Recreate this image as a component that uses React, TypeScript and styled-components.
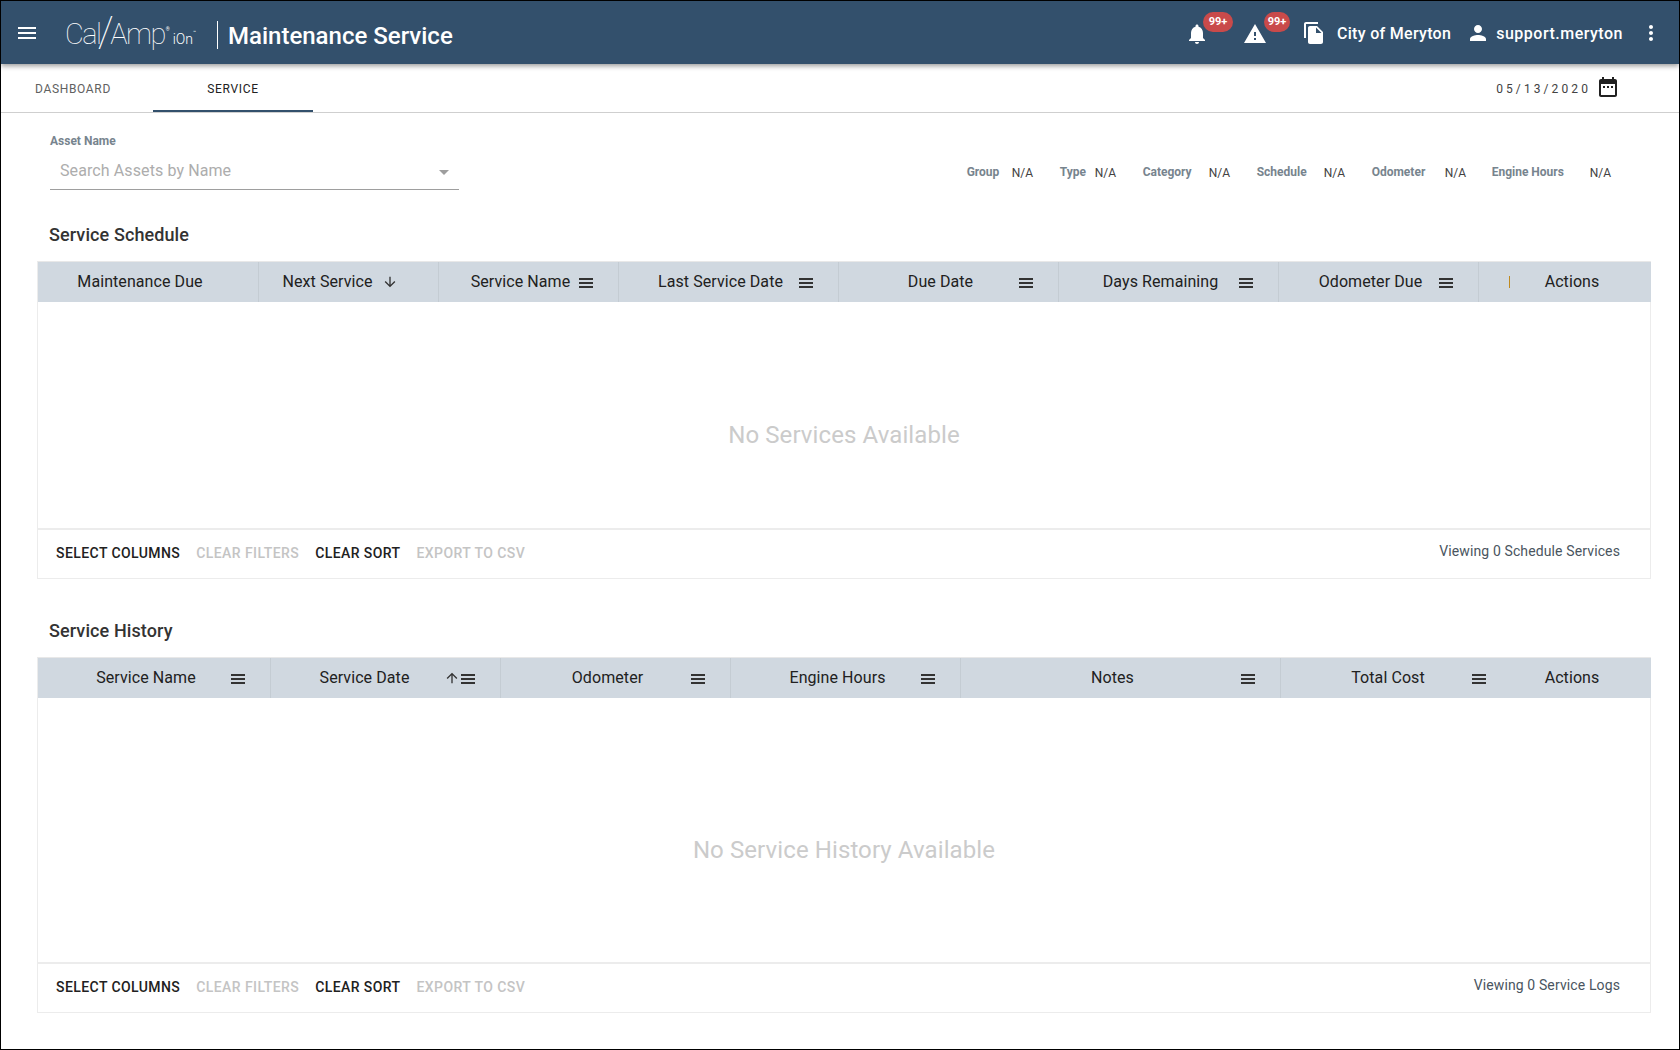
import React from "react";
import styled, { createGlobalStyle } from "styled-components";

const Global = createGlobalStyle`
  html, body { margin: 0; padding: 0; background: #fff; }
  body { font-family: Roboto, "Liberation Sans", sans-serif; color: #212121; }
  * { box-sizing: border-box; }
`;

const Page = styled.div`
  width: 1680px;
  height: 1050px;
  border: 1px solid #000;
  display: flex;
  flex-direction: column;
  overflow: hidden;
  background: #fff;
`;

const TopBar = styled.header`
  height: 63px;
  flex: none;
  display: flex;
  align-items: center;
  background: #33506c;
  color: #fff;
  position: relative;
  z-index: 1;
  box-shadow: 0 2px 5px rgba(0, 0, 0, 0.4);
  padding-left: 14px;
`;

const Icon = styled.svg<{ $size?: number; $color?: string }>`
  width: ${(p) => p.$size ?? 24}px;
  height: ${(p) => p.$size ?? 24}px;
  flex: none;
  display: block;
  fill: ${(p) => p.$color ?? "currentColor"};
`;

const Logo = styled.div`
  margin: 4px 0 0 26px;
  width: 142px;
  display: flex;
  align-items: baseline;
  font-weight: 100;
  font-size: 29px;
  letter-spacing: -1.6px;
  white-space: nowrap;
  line-height: 40px;
`;

const LogoSlash = styled.span`
  font-size: 42px;
  font-weight: 100;
  letter-spacing: -3.5px;
  margin-left: -2.5px;
  line-height: 40px;
  transform: translateY(2px);
`;

const LogoReg = styled.span`
  font-size: 5px;
  line-height: 5px;
  font-weight: 400;
  letter-spacing: 0;
  align-self: flex-start;
  margin: 17px 3px 0 1px;
`;

const LogoIon = styled.span`
  font-size: 14px;
  font-weight: 300;
  letter-spacing: 0;
`;

const LogoTm = styled.span`
  font-size: 5px;
  line-height: 5px;
  font-weight: 400;
  letter-spacing: 0;
  align-self: flex-start;
  margin-top: 20px;
`;

const TitleRule = styled.div`
  width: 1px;
  height: 28px;
  background: #fff;
  margin-left: 10px;
  margin-top: 4px;
`;

const AppTitle = styled.h1`
  margin: 7px 0 0 10px;
  font-size: 24px;
  font-weight: 500;
  line-height: 32px;
`;

const TopActions = styled.div`
  margin-left: auto;
  display: flex;
  align-items: center;
  padding-right: 16px;
`;

const AlertSlot = styled.div<{ $width: number }>`
  position: relative;
  width: ${(p) => p.$width}px;
  display: flex;
  margin-top: 2px;
`;

const Badge = styled.span<{ $left: number; $width: number }>`
  position: absolute;
  left: ${(p) => p.$left}px;
  top: -10px;
  width: ${(p) => p.$width}px;
  height: 20px;
  border-radius: 10px;
  background: #c94a4a;
  color: #fff;
  font-size: 11px;
  font-weight: 700;
  line-height: 19px;
  text-align: center;
`;

const TopText = styled.span<{ $gap: number; $track: number }>`
  font-size: 16px;
  font-weight: 500;
  line-height: 24px;
  margin: 2px 0 0 ${(p) => p.$gap}px;
  letter-spacing: ${(p) => p.$track}px;
`;

const TopIcon = styled.span<{ $gap: number }>`
  margin-left: ${(p) => p.$gap}px;
`;

const TabsBar = styled.nav`
  height: 49px;
  flex: none;
  display: flex;
  align-items: stretch;
  border-bottom: 1px solid #cfcfcf;
`;

const Tab = styled.div<{ $active?: boolean; $width: number; $shift?: number }>`
  width: ${(p) => p.$width}px;
  padding-right: ${(p) => p.$shift ?? 0}px;
  padding-top: 4px;
  height: 48px;
  display: flex;
  align-items: center;
  justify-content: center;
  font-size: 12px;
  letter-spacing: 0.65px;
  color: ${(p) => (p.$active ? "#212121" : "#616161")};
  border-bottom: 2px solid ${(p) => (p.$active ? "#33506c" : "transparent")};
`;

const DateBox = styled.div`
  margin-left: auto;
  display: flex;
  align-items: center;
  padding-right: 59px;
  color: #212121;
  padding-bottom: 2px;
`;

const DateText = styled.span`
  font-size: 12px;
  letter-spacing: 3.1px;
  color: #424242;
  margin-right: 5px;
  padding-top: 4px;
`;

const Content = styled.main`
  flex: 1;
  padding: 0 28px 0 36px;
`;

const AssetRow = styled.section`
  height: 77px;
  display: flex;
  justify-content: space-between;
  padding: 20px 40px 0 13px;
`;

const AssetField = styled.div`
  width: 409px;
`;

const FieldLabel = styled.div`
  font-size: 12px;
  font-weight: 700;
  line-height: 16px;
  color: #77848e;
`;

const FieldInput = styled.div`
  height: 41px;
  display: flex;
  align-items: center;
  justify-content: space-between;
  padding: 3px 10px 0 10px;
  border-bottom: 1px solid #9e9e9e;
  font-size: 16px;
  letter-spacing: 0.1px;
  color: #adadad;
`;

const Caret = styled.span`
  width: 0;
  height: 0;
  margin-top: 3px;
  border-left: 5px solid transparent;
  border-right: 5px solid transparent;
  border-top: 5px solid #9e9e9e;
`;

const InfoRow = styled.div`
  display: flex;
  align-items: center;
  height: 20px;
  margin-top: 29px;
`;

const InfoPair = styled.div<{ $width?: number }>`
  display: flex;
  align-items: center;
  width: ${(p) => (p.$width ? `${p.$width}px` : "auto")};
`;

const InfoLabel = styled.span<{ $width: number }>`
  width: ${(p) => p.$width}px;
  font-size: 12px;
  font-weight: 700;
  color: #77848e;
  white-space: nowrap;
`;

const InfoValue = styled.span`
  font-size: 12px;
  color: #424242;
  padding-top: 1px;
`;

const SectionTitle = styled.h2<{ $top: number }>`
  margin: 0 0 14px 12px;
  font-size: 18px;
  font-weight: 500;
  line-height: 24px;
  letter-spacing: 0.1px;
  color: #333;
  padding-top: ${(p) => p.$top}px;
`;

const Table = styled.section`
  border: 1px solid #ececec;
  border-top-color: #e8e8e8;
`;

const HeadRow = styled.div`
  display: flex;
  height: 40px;
  background: #d0d8e0;
  margin: 0 -1px 0 0;
`;

const HeadCell = styled.div<{ $width: number; $divider?: boolean }>`
  width: ${(p) => p.$width}px;
  flex: none;
  display: flex;
  align-items: center;
  padding-right: 23px;
  border-right: ${(p) => (p.$divider ? "1px solid #c4ccd3" : "0")};
  font-size: 16px;
  line-height: 20px;
  letter-spacing: 0.08px;
  color: #212121;
  white-space: nowrap;
`;

const HeadLabel = styled.span<{ $overlap: number }>`
  flex: 1;
  min-width: 0;
  text-align: center;
  margin-right: -${(p) => p.$overlap}px;
`;

const MenuGlyph = styled(Icon)<{ $hidden?: boolean }>`
  visibility: ${(p) => (p.$hidden ? "hidden" : "visible")};
  margin-top: 2px;
  color: #333;
`;

const SortGlyph = styled(Icon)`
  margin-right: -1px;
  color: #333;
`;

const ResizeCell = styled.div`
  width: 32px;
  flex: none;
  display: flex;
  align-items: center;
  justify-content: flex-end;
  padding-right: 1px;
`;

const ResizeTick = styled.span`
  width: 1px;
  height: 12px;
  background: #c08a20;
`;

const Body = styled.div<{ $height: number }>`
  height: ${(p) => p.$height}px;
  padding-top: 40px;
  display: flex;
  align-items: center;
  justify-content: center;
  font-size: 24px;
  letter-spacing: 0.1px;
  color: #cbcbcb;
`;

const Footer = styled.div`
  height: 50px;
  border-top: 2px solid #ececec;
  display: flex;
  justify-content: space-between;
  padding: 0 30px 0 18px;
`;

const ButtonRow = styled.div`
  display: flex;
  align-items: center;
  gap: 16px;
  padding-bottom: 3px;
`;

const FootButton = styled.span<{ $disabled?: boolean }>`
  font-size: 14px;
  font-weight: 500;
  letter-spacing: 0.42px;
  color: ${(p) => (p.$disabled ? "#c4c4c4" : "#212121")};
  white-space: nowrap;
`;

const Count = styled.span`
  font-size: 14px;
  letter-spacing: 0.12px;
  color: #4a5560;
  padding-top: 11px;
  line-height: 20px;
`;

const P = {
  menu: "M3 18h18v-2H3v2zm0-5h18v-2H3v2zm0-7v2h18V6H3z",
  bars: "M2 4h14v2H2zM2 8h14v2H2zM2 12h14v2H2z",
  down: "M20 12l-1.41-1.41L13 16.17V4h-2v12.17l-5.58-5.59L4 12l8 8 8-8z",
  up: "M4 12l1.41 1.41L11 7.83V20h2V7.83l5.58 5.59L20 12l-8-8-8 8z",
  bell: "M12 22c1.1 0 2-.9 2-2h-4c0 1.1.89 2 2 2zm6-6v-5c0-3.07-1.64-5.64-4.5-6.32V4c0-.83-.67-1.5-1.5-1.5s-1.5.67-1.5 1.5v.68C7.63 5.36 6 7.92 6 11v5l-2 2v1h16v-1l-2-2z",
  warn: "M1 21h22L12 2 1 21zm12-3h-2v-2h2v2zm0-4h-2v-4h2v4z",
  copy: "M16 1H4c-1.1 0-2 .9-2 2v14h2V3h12V1zm-1 4l6 6v10c0 1.1-.9 2-2 2H7.99C6.89 23 6 22.1 6 21l.01-14c0-1.1.89-2 1.99-2h7zm-1 7h5.5L14 6.5V12z",
  person: "M12 12c2.21 0 4-1.79 4-4s-1.79-4-4-4-4 1.79-4 4 1.79 4 4 4zm0 2c-2.67 0-8 1.34-8 4v2h16v-2c0-2.66-5.33-4-8-4z",
  more: "M12 8c1.1 0 2-.9 2-2s-.9-2-2-2-2 .9-2 2 .9 2 2 2zm0 2c-1.1 0-2 .9-2 2s.9 2 2 2 2-.9 2-2-.9-2-2-2zm0 6c-1.1 0-2 .9-2 2s.9 2 2 2 2-.9 2-2-.9-2-2-2z",
  date: "M9 11H7v2h2v-2zm4 0h-2v2h2v-2zm4 0h-2v2h2v-2zm2-7h-1V2h-2v2H8V2H6v2H5c-1.11 0-1.99.9-1.99 2L3 20c0 1.1.89 2 2 2h14c1.1 0 2-.9 2-2V6c0-1.1-.9-2-2-2zm0 16H5V9h14v11z",
};

const Glyph = ({ d, size, color }: { d: string; size?: number; color?: string }) => (
  <Icon viewBox="0 0 24 24" $size={size} $color={color}>
    <path d={d} />
  </Icon>
);

type Column = { label: string; width: number; sort?: "up" | "down"; menu?: boolean; divider?: boolean };

const Column = ({ label, width, sort, menu, divider }: Column) => {
  const overlap = sort ? 14 : 25;
  return (
    <HeadCell $width={width} $divider={divider}>
      <HeadLabel $overlap={overlap}>{label}</HeadLabel>
      {sort && (
        <SortGlyph viewBox="0 0 24 24" $size={16}>
          <path d={P[sort]} />
        </SortGlyph>
      )}
      <MenuGlyph viewBox="0 0 18 18" $size={18} $hidden={!menu}>
        <path d={P.bars} />
      </MenuGlyph>
    </HeadCell>
  );
};

const scheduleColumns: Column[] = [
  { label: "Maintenance Due", width: 221, divider: true },
  { label: "Next Service", width: 180, sort: "down", divider: true },
  { label: "Service Name", width: 180, menu: true, divider: true },
  { label: "Last Service Date", width: 220, menu: true, divider: true },
  { label: "Due Date", width: 220, menu: true, divider: true },
  { label: "Days Remaining", width: 220, menu: true, divider: true },
  { label: "Odometer Due", width: 200, menu: true, divider: true },
];

const historyColumns: Column[] = [
  { label: "Service Name", width: 233, menu: true, divider: true },
  { label: "Service Date", width: 230, sort: "up", menu: true, divider: true },
  { label: "Odometer", width: 230, menu: true, divider: true },
  { label: "Engine Hours", width: 230, menu: true, divider: true },
  { label: "Notes", width: 320, menu: true, divider: true },
  { label: "Total Cost", width: 230, menu: true },
];

const info = [
  { label: "Group", labelWidth: 45, width: 93 },
  { label: "Type", labelWidth: 35, width: 83 },
  { label: "Category", labelWidth: 66, width: 114 },
  { label: "Schedule", labelWidth: 67, width: 115 },
  { label: "Odometer", labelWidth: 73, width: 120 },
  { label: "Engine Hours", labelWidth: 98 },
];

const ServiceTable = ({
  columns,
  resize,
  bodyHeight,
  empty,
  count,
}: {
  columns: Column[];
  resize?: boolean;
  bodyHeight: number;
  empty: string;
  count: string;
}) => (
  <Table>
    <HeadRow>
      {columns.map((c) => (
        <Column key={c.label} {...c} />
      ))}
      {resize && (
        <ResizeCell>
          <ResizeTick />
        </ResizeCell>
      )}
      <HeadCell $width={140}>
        <HeadLabel $overlap={5}>Actions</HeadLabel>
      </HeadCell>
    </HeadRow>
    <Body $height={bodyHeight}>{empty}</Body>
    <Footer>
      <ButtonRow>
        <FootButton>SELECT COLUMNS</FootButton>
        <FootButton $disabled>CLEAR FILTERS</FootButton>
        <FootButton>CLEAR SORT</FootButton>
        <FootButton $disabled>EXPORT TO CSV</FootButton>
      </ButtonRow>
      <Count>{count}</Count>
    </Footer>
  </Table>
);

export default function App() {
  return (
    <Page>
      <Global />
      <TopBar>
        <Glyph d={P.menu} />
        <Logo>
          Cal<LogoSlash>/</LogoSlash>Amp<LogoReg>®</LogoReg>
          <LogoIon>iOn</LogoIon>
          <LogoTm>™</LogoTm>
        </Logo>
        <TitleRule />
        <AppTitle>Maintenance Service</AppTitle>
        <TopActions>
          <AlertSlot $width={58}>
            <Glyph d={P.bell} />
            <Badge $left={18} $width={30}>99+</Badge>
          </AlertSlot>
          <AlertSlot $width={59}>
            <Glyph d={P.warn} />
            <Badge $left={21} $width={26}>99+</Badge>
          </AlertSlot>
          <Glyph d={P.copy} />
          <TopText $gap={11} $track={0.3}>City of Meryton</TopText>
          <TopIcon $gap={15}>
            <Glyph d={P.person} />
          </TopIcon>
          <TopText $gap={6} $track={0.5}>support.meryton</TopText>
          <TopIcon $gap={16}>
            <Glyph d={P.more} />
          </TopIcon>
        </TopActions>
      </TopBar>
      <TabsBar>
        <Tab $width={152} $shift={8}>DASHBOARD</Tab>
        <Tab $width={160} $active>SERVICE</Tab>
        <DateBox>
          <DateText>05/13/2020</DateText>
          <Glyph d={P.date} />
        </DateBox>
      </TabsBar>
      <Content>
        <AssetRow>
          <AssetField>
            <FieldLabel>Asset Name</FieldLabel>
            <FieldInput>
              Search Assets by Name
              <Caret />
            </FieldInput>
          </AssetField>
          <InfoRow>
            {info.map((i) => (
              <InfoPair key={i.label} $width={i.width}>
                <InfoLabel $width={i.labelWidth}>{i.label}</InfoLabel>
                <InfoValue>N/A</InfoValue>
              </InfoPair>
            ))}
          </InfoRow>
        </AssetRow>
        <SectionTitle $top={33}>Service Schedule</SectionTitle>
        <ServiceTable
          columns={scheduleColumns}
          resize
          bodyHeight={226}
          empty="No Services Available"
          count="Viewing 0 Schedule Services"
        />
        <SectionTitle $top={40}>Service History</SectionTitle>
        <ServiceTable
          columns={historyColumns}
          bodyHeight={264}
          empty="No Service History Available"
          count="Viewing 0 Service Logs"
        />
      </Content>
    </Page>
  );
}
